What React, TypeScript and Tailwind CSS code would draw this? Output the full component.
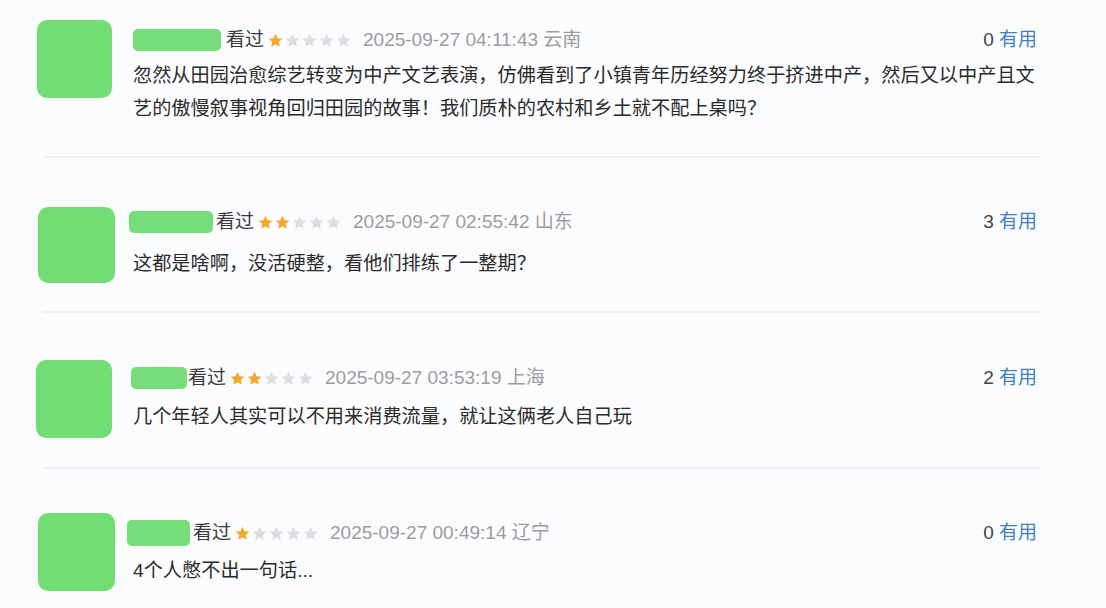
import React from "react";

type Review = {
  rowCls: string;
  avatarCls: string;
  colCls: string;
  headCls: string;
  nameCls: string;
  seenCls: string;
  bodyCls: string;
  stars: number;
  time: string;
  place: string;
  useful: number;
  lines: string[];
};

const reviews: Review[] = [
  {
    rowCls: "h-[156px] pt-[20px]",
    avatarCls: "ml-[37px] w-[75px] h-[78px]",
    colCls: "ml-[21px]",
    headCls: "mt-[7px]",
    nameCls: "w-[88px] h-[22px]",
    seenCls: "ml-[5px]",
    bodyCls: "mt-[5.5px] pl-0",
    stars: 1,
    time: "2025-09-27 04:11:43",
    place: "云南",
    useful: 0,
    lines: [
      "忽然从田园治愈综艺转变为中产文艺表演，仿佛看到了小镇青年历经努力终于挤进中产，然后又以中产且文",
      "艺的傲慢叙事视角回归田园的故事！我们质朴的农村和乡土就不配上桌吗？",
    ],
  },
  {
    rowCls: "h-[153px] pt-[49px]",
    avatarCls: "ml-[38px] w-[77px] h-[76px]",
    colCls: "ml-[14px]",
    headCls: "mt-[2px]",
    nameCls: "w-[84px] h-[22px]",
    seenCls: "ml-[3px]",
    bodyCls: "mt-[11.5px] pl-[4px]",
    stars: 2,
    time: "2025-09-27 02:55:42",
    place: "山东",
    useful: 3,
    lines: ["这都是啥啊，没活硬整，看他们排练了一整期？"],
  },
  {
    rowCls: "h-[154px] pt-[47px]",
    avatarCls: "ml-[36px] w-[76px] h-[78px]",
    colCls: "ml-[19px]",
    headCls: "mt-[5px]",
    nameCls: "w-[56px] h-[22px]",
    seenCls: "ml-[1px]",
    bodyCls: "mt-[8.5px] pl-[2px]",
    stars: 2,
    time: "2025-09-27 03:53:19",
    place: "上海",
    useful: 2,
    lines: ["几个年轻人其实可以不用来消费流量，就让这俩老人自己玩"],
  },
  {
    rowCls: "h-[139px] pt-[44px]",
    avatarCls: "ml-[38px] w-[77px] h-[78px]",
    colCls: "ml-[12px]",
    headCls: "mt-[7px]",
    nameCls: "w-[63px] h-[26px]",
    seenCls: "ml-[3px]",
    bodyCls: "mt-[7.5px] pl-[6px]",
    stars: 1,
    time: "2025-09-27 00:49:14",
    place: "辽宁",
    useful: 0,
    lines: ["4个人憋不出一句话..."],
  },
];

function Star({ on }: { on: boolean }) {
  return (
    <svg width="17" height="17" viewBox="0 0 24 24" className="shrink-0">
      <path
        d="M12 2.5l2.9 6.3 6.8.7-5.1 4.6 1.5 6.8L12 17.4l-6.1 3.5 1.5-6.8L2.3 9.5l6.8-.7z"
        fill={on ? "#f5a72a" : "#dcdde0"}
      />
    </svg>
  );
}

function ReviewRow({ r }: { r: Review }) {
  return (
    <div className={`flex ${r.rowCls}`}>
      <div className={`shrink-0 rounded-[10px] bg-[#73dd75] ${r.avatarCls}`} />
      <div className={`flex-1 min-w-0 pr-[69px] ${r.colCls}`}>
        <div className={`flex items-center h-[26px] ${r.headCls}`}>
          <div className={`rounded-[5px] bg-[#75dd7a] ${r.nameCls}`} />
          <span className={`text-[19px] text-[#3a3a3a] ${r.seenCls}`}>看过</span>
          <div className="flex ml-[3px]">
            {[0, 1, 2, 3, 4].map((i) => (
              <Star key={i} on={i < r.stars} />
            ))}
          </div>
          <span className="ml-[11px] text-[19px] text-[#9b9ca0]">
            {r.time} {r.place}
          </span>
          <span className="ml-auto text-[19px] text-[#444]">
            {r.useful} <span className="text-[#3f7fc6]">有用</span>
          </span>
        </div>
        <div className={`text-[19.2px] leading-[33px] text-[#2b2b2b] ${r.bodyCls}`}>
          {r.lines.map((l, i) => (
            <div key={i} className="whitespace-nowrap">
              {l}
            </div>
          ))}
        </div>
      </div>
    </div>
  );
}

export default function App() {
  return (
    <div className="w-[1106px] h-[608px] overflow-hidden bg-[#fbfcfe] font-['Liberation_Sans','Noto_Sans_CJK_SC',sans-serif]">
      {reviews.map((r, i) => (
        <React.Fragment key={i}>
          {i > 0 && <div className="ml-[43px] w-[997px] h-[2px] bg-[#eef0f3]" />}
          <ReviewRow r={r} />
        </React.Fragment>
      ))}
    </div>
  );
}
